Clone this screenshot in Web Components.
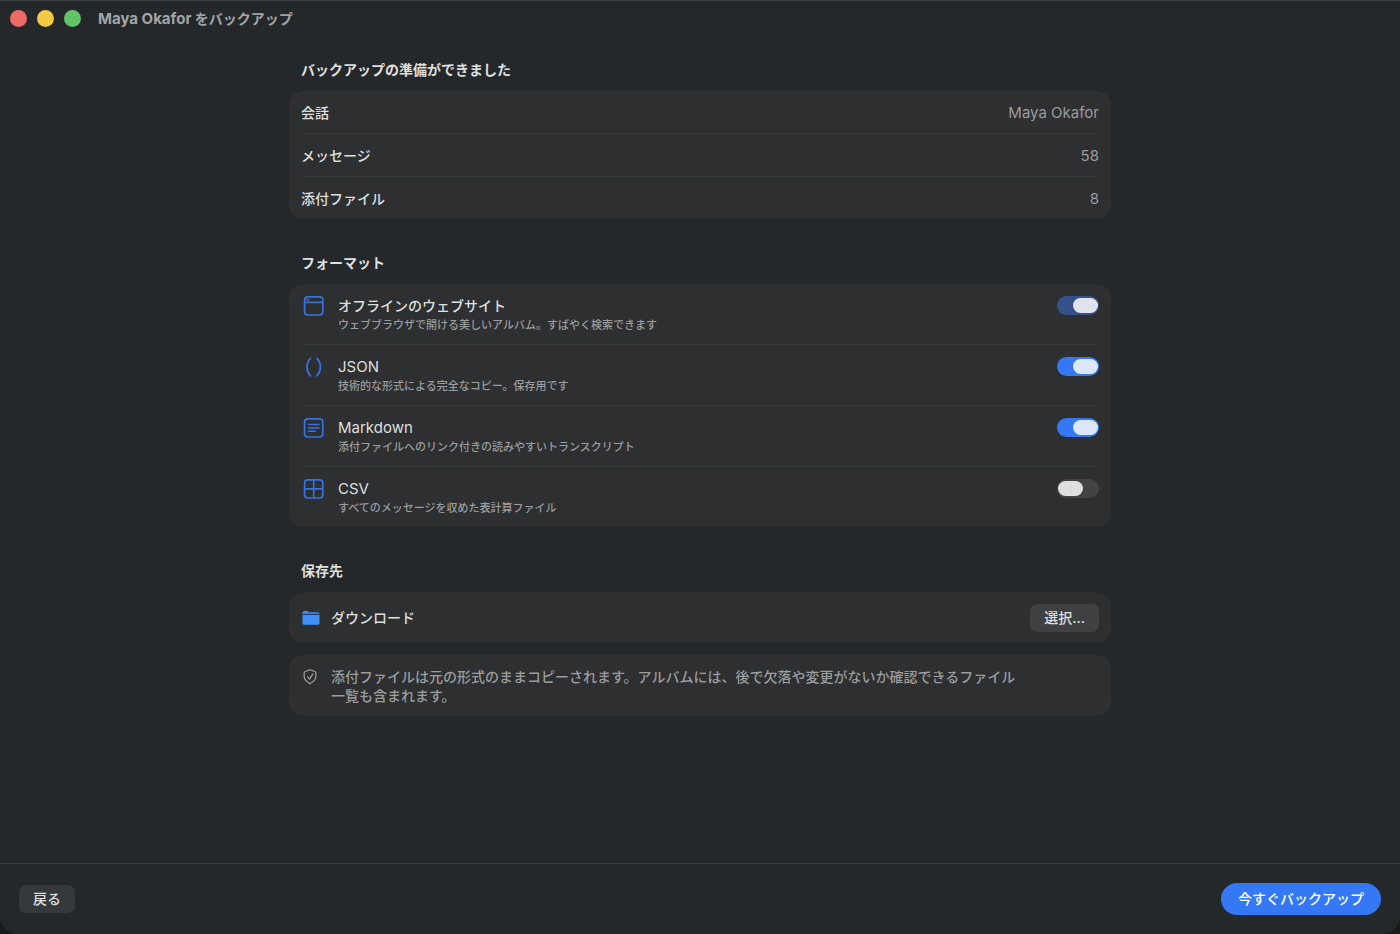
<!DOCTYPE html>
<html lang="ja">
<head>
<meta charset="utf-8">
<meta name="viewport" content="width=device-width, initial-scale=1">
<title>Maya Okafor をバックアップ</title>
<style>
  :root {
    --bg: #24282b;
    --card: #2d2f30;
    --line: #36393a;
    --text: #dedfdf;
    --muted: #9a9c9d;
    --accent: #3478f6;
  }
  body {
    margin: 0;
    background: #1a1b1b;
    color: var(--text);
    font: 500 14px/20px Inter, "Noto Sans CJK JP", sans-serif;
  }
</style>
</head>
<body>
<backup-window></backup-window>

<script>
const define = (name, html, setup) => {
  const template = document.createElement('template');
  template.innerHTML = html;
  customElements.define(name, class extends HTMLElement {
    constructor() {
      super();
      this.attachShadow({ mode: 'open' }).append(template.content.cloneNode(true));
    }
    connectedCallback() { if (setup) setup(this, this.shadowRoot); }
  });
};

const icons = {
  website: `<svg width="25" height="24" viewBox="0 0 25 24" fill="none" stroke="#3773df" stroke-width="1.7"><rect x="3.6" y="2.8" width="18.2" height="18.2" rx="3.2"/><path d="M4 8.4h17.500"/><path d="M6.200 5.700h1.600" stroke-linecap="round"/></svg>`,
  json: `<svg width="25" height="24" viewBox="0 0 25 24" fill="none" stroke="#3773df" stroke-width="1.7" stroke-linecap="round"><path d="M9.400 3.200C4.800 8.500 4.800 15.500 9.400 20.800M16 3.200c4.600 5.300 4.600 12.300 0 17.600"/></svg>`,
  markdown: `<svg width="25" height="24" viewBox="0 0 25 24" fill="none" stroke="#3773df" stroke-width="1.7" stroke-linecap="round"><rect x="3.600" y="2.800" width="18.200" height="18.200" rx="3.200"/><path d="M7.500 8.500h10.500M7.500 11.900h10.500M7.500 15.300h7" stroke-width="1.500"/></svg>`,
  csv: `<svg width="25" height="24" viewBox="0 0 25 24" fill="none" stroke="#3773df" stroke-width="1.7"><rect x="3.600" y="2.800" width="18.200" height="18.200" rx="3.200"/><path d="M12.700 3v18M3.600 11.900h18.200"/></svg>`,
  folder: `<svg width="20" height="20" viewBox="0 0 20 20"><path d="M1.500 6V4.600Q1.500 3 3.100 3H6q.7 0 1.200.5l.5.400q.4.300 1 .300h8.200q1.600 0 1.600 1.600V6z" fill="#3f8cf5"/><path d="M1.500 6.800h17v8.400q0 1.600-1.600 1.600H3.100q-1.600 0-1.600-1.600z" fill="#4090fb"/><path d="M2.700 6.300h15.800" stroke="#203c63" stroke-width=".9"/></svg>`,
  shield: `<svg width="20" height="20" viewBox="0 0 20 20" fill="none" stroke="#a2a4a5" stroke-width="1.200" stroke-linecap="round" stroke-linejoin="round"><path d="M9 2.700 13.900 4.500q.9.300.9 1.300v4.300q0 3.200-5.800 6.600-5.800-3.400-5.800-6.600V5.800q0-1 .9-1.300z"/><path d="m6.700 9.800 1.900 2.300 3.100-5"/></svg>`
};

define('app-icon', `
  <style>:host { display: block; flex: none; } svg { display: block; }</style>
  <span aria-hidden="true"></span>`,
  (host, root) => { root.querySelector('span').innerHTML = icons[host.getAttribute('name')]; });

define('title-bar', `
  <style>
    :host { display: flex; align-items: center; height: 37px; padding: 0 10px; border-top: 1px solid #3b3f42; border-bottom: 1px solid #212527; box-sizing: border-box; }
    .lights { display: flex; gap: 10px; margin-right: 17px; }
    button { width: 17px; height: 17px; padding: 0; border: 0; border-radius: 50%; }
    .close { background: #ed6a65; }
    .min { background: #f4ca44; }
    .zoom { background: #62c466; }
    h1 { margin: 0; font: inherit; font-weight: 700; color: #a2a5a6; }
  </style>
  <div class="lights">
    <button class="close" aria-label="閉じる"></button>
    <button class="min" aria-label="しまう"></button>
    <button class="zoom" aria-label="拡大"></button>
  </div>
  <h1><slot></slot></h1>`);

define('form-section', `
  <style>
    :host { display: block; }
    h2 { margin: 0 12px 11px; font: inherit; font-weight: 600; }
    .stack { display: grid; gap: 12px; }
  </style>
  <h2></h2>
  <div class="stack"><slot></slot></div>`,
  (host, root) => { root.querySelector('h2').textContent = host.getAttribute('heading'); });

define('group-card', `
  <style>
    :host { display: block; padding: 0 12px; border-radius: 14px; background: var(--card); }
    ::slotted(*:not(:last-child)) { border-bottom: 1px solid var(--line); }
  </style>
  <slot></slot>`);

define('info-row', `
  <style>
    :host { display: flex; justify-content: space-between; padding: 12px 0 10px; }
    .value { color: var(--muted); font-size: 15px; font-weight: 400; }
  </style>
  <span class="label"></span>
  <span class="value"><slot></slot></span>`,
  (host, root) => { root.querySelector('.label').textContent = host.getAttribute('label'); });

define('format-row', `
  <style>
    :host { display: grid; grid-template-columns: 25px 1fr auto; column-gap: 12px; padding: 12px 0 10px; }
    app-icon { margin-top: -2px; }
    label { display: block; }
    :host([latin]) label { font-size: 15px; font-weight: 400; }
    p { margin: 0; font-size: 11px; line-height: 18px; color: var(--muted); }
    input {
      appearance: none; display: block; box-sizing: border-box; width: 42px; height: 19px; margin: 0; padding: 2px 1px;
      border-radius: 10px; background: #414344;
    }
    input::before { content: ""; display: block; width: 25px; height: 15px; border-radius: 8px; background: #dfdfdf; }
    input:checked { background: var(--accent); }
    input:checked::before { margin-left: auto; background: #dde7fb; }
    input:disabled { background: #34518b; }
    input:disabled::before { background: #e0e2ec; }
  </style>
  <app-icon></app-icon>
  <div>
    <label for="switch"></label>
    <p id="note"><slot></slot></p>
  </div>
  <input id="switch" type="checkbox" role="switch" aria-describedby="note">`,
  (host, root) => {
    root.querySelector('label').textContent = host.getAttribute('label');
    const old = root.querySelector('app-icon');
    const icon = document.createElement('app-icon');
    icon.setAttribute('name', host.getAttribute('icon'));
    old.replaceWith(icon);
    const input = root.querySelector('input');
    input.checked = host.hasAttribute('on');
    input.disabled = host.hasAttribute('locked');
  });

define('push-button', `
  <style>
    :host { display: block; }
    button { display: block; height: 28px; padding: 0 14px; border: 0; border-radius: 7px; background: #3e4041; color: var(--text); font: inherit; }
    :host([quiet]) button { background: #35393b; }
    :host([primary]) button { height: 32px; padding: 0 17px; border-radius: 16px; background: var(--accent); color: #fff; }
  </style>
  <button type="button"><slot></slot></button>`);

define('destination-row', `
  <style>
    :host { display: flex; align-items: center; gap: 10px; padding: 12px 0 11px; }
    .name { flex: 1; }
  </style>
  <app-icon name="folder"></app-icon>
  <span class="name"><slot></slot></span>
  <push-button>選択...</push-button>`);

define('note-row', `
  <style>
    :host { display: flex; align-items: flex-start; gap: 10px; padding: 12px 0 11px; line-height: 19px; color: var(--muted); }
    p { margin: 0; max-width: 690px; }
  </style>
  <app-icon name="shield"></app-icon>
  <p><slot></slot></p>`);

define('action-bar', `
  <style>
    :host { display: flex; align-items: center; justify-content: space-between; padding: 19px; border-top: 1px solid #3c4042; }
  </style>
  <slot></slot>`);

define('backup-window', `
  <style>
    :host { display: flex; flex-direction: column; min-height: 100vh; background: var(--bg); border-radius: 0 0 18px 18px; }
    main { flex: 1; display: grid; align-content: start; gap: 34px; width: 100%; max-width: 822px; margin: 0 auto; padding: 23px 0; }
    .latin { font-size: 15px; }
  </style>
  <title-bar><span class="latin">Maya Okafor</span> をバックアップ</title-bar>
  <main>
    <form-section heading="バックアップの準備ができました">
      <group-card>
        <info-row label="会話">Maya Okafor</info-row>
        <info-row label="メッセージ">58</info-row>
        <info-row label="添付ファイル">8</info-row>
      </group-card>
    </form-section>
    <form-section heading="フォーマット">
      <group-card>
        <format-row icon="website" label="オフラインのウェブサイト" on locked>ウェブブラウザで開ける美しいアルバム。すばやく検索できます</format-row>
        <format-row icon="json" label="JSON" latin on>技術的な形式による完全なコピー。保存用です</format-row>
        <format-row icon="markdown" label="Markdown" latin on>添付ファイルへのリンク付きの読みやすいトランスクリプト</format-row>
        <format-row icon="csv" label="CSV" latin>すべてのメッセージを収めた表計算ファイル</format-row>
      </group-card>
    </form-section>
    <form-section heading="保存先">
      <group-card><destination-row>ダウンロード</destination-row></group-card>
      <group-card><note-row>添付ファイルは元の形式のままコピーされます。アルバムには、後で欠落や変更がないか確認できるファイル一覧も含まれます。</note-row></group-card>
    </form-section>
  </main>
  <action-bar>
    <push-button quiet>戻る</push-button>
    <push-button primary>今すぐバックアップ</push-button>
  </action-bar>`);
</script>
</body>
</html>
